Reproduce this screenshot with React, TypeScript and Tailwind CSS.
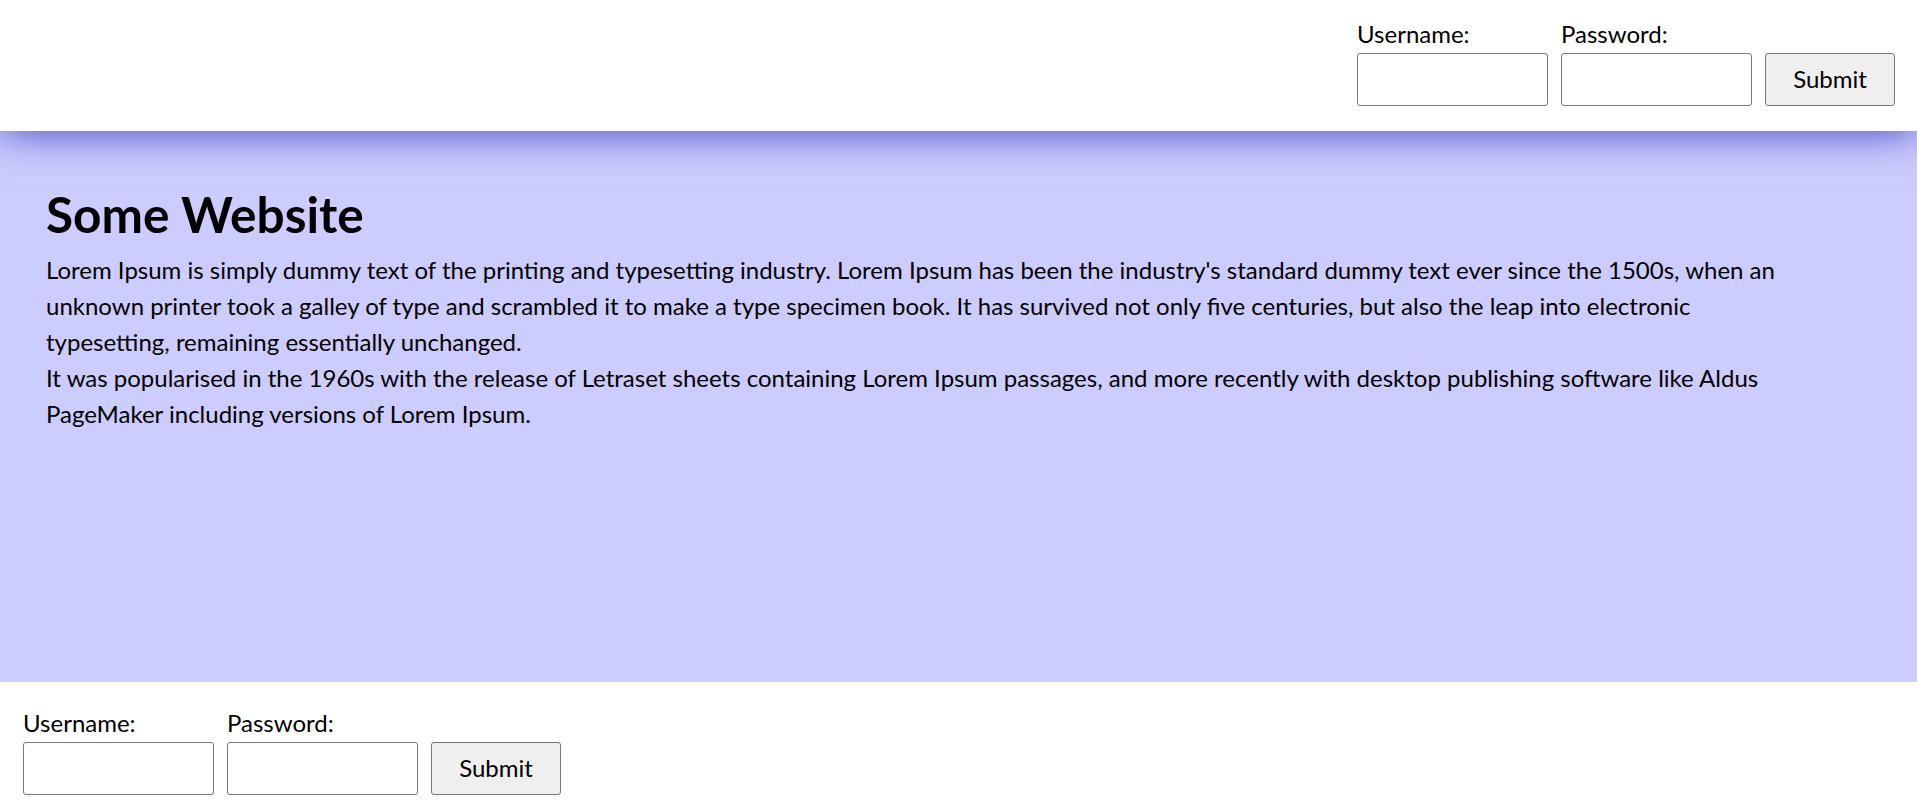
import React, { FC } from "react";

const LoginForm: FC<{ className?: string }> = ({ className }) => {
  return (
    <form className={"flex items-end gap-[13px] " + (className ?? "")}>
      <label className="flex flex-col gap-[4px]">
        <span className="leading-[1.2]">Username:</span>
        <input
          type="text"
          className="w-[191px] h-[53px] bg-white border border-[#767676] rounded-[3px] px-2 outline-none"
        />
      </label>
      <label className="flex flex-col gap-[4px]">
        <span className="leading-[1.2]">Password:</span>
        <input
          type="password"
          className="w-[191px] h-[53px] bg-white border border-[#767676] rounded-[3px] px-2 outline-none"
        />
      </label>
      <button
        type="submit"
        className="w-[130px] h-[53px] bg-[#efefef] border border-[#767676] rounded-[3px] text-black"
      >
        Submit
      </button>
    </form>
  );
};

const App: FC = () => {
  return (
    <div className="min-h-screen bg-white text-black text-[24px] font-['Lato',sans-serif]">
      <header className="relative z-10 h-[131px] bg-white flex justify-end items-start pt-[20px] pr-[22px] shadow-[0_0_40px_rgba(0,0,160,0.7)]">
        <LoginForm />
      </header>

      <main className="h-[551px] bg-[#ccccff] px-[46px] pt-[54px]">
        <h1 className="text-[49.5px] font-bold leading-[1.2] mb-[8px]">Some Website</h1>
        <p className="leading-[36px]">
          Lorem Ipsum is simply dummy text of the printing and typesetting industry. Lorem Ipsum has been the
          industry's standard dummy text ever since the 1500s, when an unknown printer took a galley of type and
          scrambled it to make a type specimen book. It has survived not only five centuries, but also the leap
          into electronic
          <br />
          typesetting, remaining essentially unchanged.
        </p>
        <p className="leading-[36px]">
          It was popularised in the 1960s with the release of Letraset sheets containing Lorem Ipsum passages,
          and more recently with desktop publishing software like Aldus PageMaker including versions of Lorem
          Ipsum.
        </p>
      </main>

      <footer className="pt-[27px] pl-[23px]">
        <LoginForm />
      </footer>
    </div>
  );
};

export default App;
